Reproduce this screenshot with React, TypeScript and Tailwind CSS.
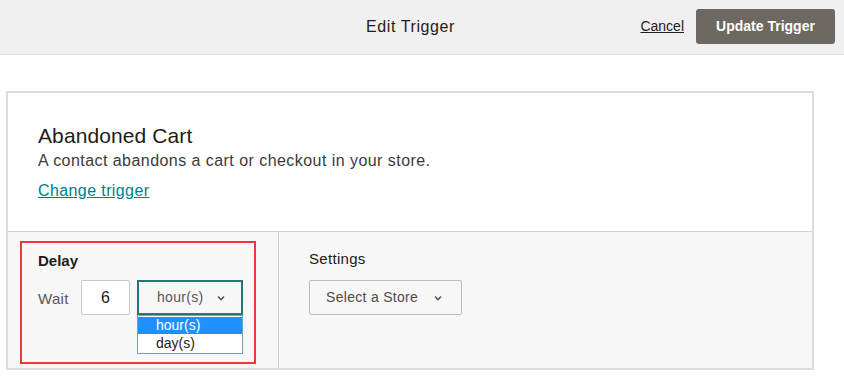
import React from "react";

const Chevron = ({ className = "" }: { className?: string }) => (
  <svg width="8" height="6" viewBox="0 0 8 6" className={className}>
    <path d="M1 1.5 L4 4.5 L7 1.5" fill="none" stroke="currentColor" strokeWidth="1.6" />
  </svg>
);

export default function App() {
  return (
    <div
      className="w-[844px] h-[385px] bg-white text-[#241c15] overflow-hidden"
      style={{ fontFamily: '"Liberation Sans", Arial, sans-serif' }}
    >
      <header className="h-[55px] bg-[#f0f0f0] border-b border-[#dedede] flex items-center">
        <div className="flex-1" />
        <h1 className="text-[16px] tracking-[0.6px] mr-[14px] text-[#241c15] font-normal">Edit Trigger</h1>
        <div className="flex-1 flex justify-end items-center pr-[9px] pb-[1px]">
          <a className="text-[14px] text-[#241c15] underline mr-[12px]" href="#">
            Cancel
          </a>
          <button className="h-[35px] w-[139px] bg-[#6e6862] text-white text-[14px] font-bold rounded-[3px]">
            Update Trigger
          </button>
        </div>
      </header>

      <div className="ml-[6px] mt-[36px] w-[808px] h-[279px] border-2 border-[#dcdcdc] flex flex-col">
        <div className="h-[139px] bg-white pl-[30px] pt-[30px] border-b border-[#cfcfcf]">
          <div className="text-[21px] leading-[26px] tracking-[0.1px] text-[#241c15]">Abandoned Cart</div>
          <div className="text-[16px] tracking-[0.45px] leading-[22px] mt-[1px] text-[#3d3a37]">
            A contact abandons a cart or checkout in your store.
          </div>
          <a href="#" className="inline-block mt-[8px] text-[16px] tracking-[0.4px] leading-[22px] text-[#007c89] underline">
            Change trigger
          </a>
        </div>

        <div className="flex-1 bg-[#f7f7f7] flex">
          <div className="w-[271px] border-r border-[#cfcfcf] pl-[12px] pt-[9px]">
            <div className="w-[236px] h-[123px] border-2 border-[#f23535] pl-[16px] pt-[8px]">
              <div className="text-[15px] font-semibold leading-[20px] text-[#241c15]">Delay</div>
              <div className="flex items-start mt-[9px]">
                <span className="text-[15px] tracking-[0.3px] text-[#5b5753] mt-[8px] w-[43px]">Wait</span>
                <div className="w-[49px] h-[35px] bg-white border border-[#c8c8c8] rounded-[2px] flex items-center justify-center text-[16px] text-[#241c15]">
                  6
                </div>
                <div className="ml-[7px] w-[106px] flex flex-col">
                  <div className="h-[35px] border-2 border-[#1c7a7b] flex items-center pl-[18px] text-[14px] tracking-[0.3px] text-[#5b5753]">
                    <span>hour(s)</span>
                    <Chevron className="ml-[14px] text-[#5b5753]" />
                  </div>
                  <div className="border border-[#7f9db9] bg-white text-[14px] pt-[1px]">
                    <div className="h-[17px] bg-[#1e90ff] text-white pl-[18px] leading-[17px]">hour(s)</div>
                    <div className="h-[19px] text-[#241c15] pl-[18px] leading-[19px]">day(s)</div>
                  </div>
                </div>
              </div>
            </div>
          </div>
          <div className="flex-1 pl-[30px] pt-[17px]">
            <div className="text-[15px] tracking-[0.3px] leading-[20px] text-[#241c15]">Settings</div>
            <div className="mt-[11px] w-[153px] h-[35px] border border-[#bdbdbd] rounded-[2px] flex items-center pl-[16px] text-[14px] tracking-[0.3px] text-[#4f4b47]">
              <span>Select a Store</span>
              <Chevron className="ml-[16px] text-[#5b5753]" />
            </div>
          </div>
        </div>
      </div>
    </div>
  );
}
